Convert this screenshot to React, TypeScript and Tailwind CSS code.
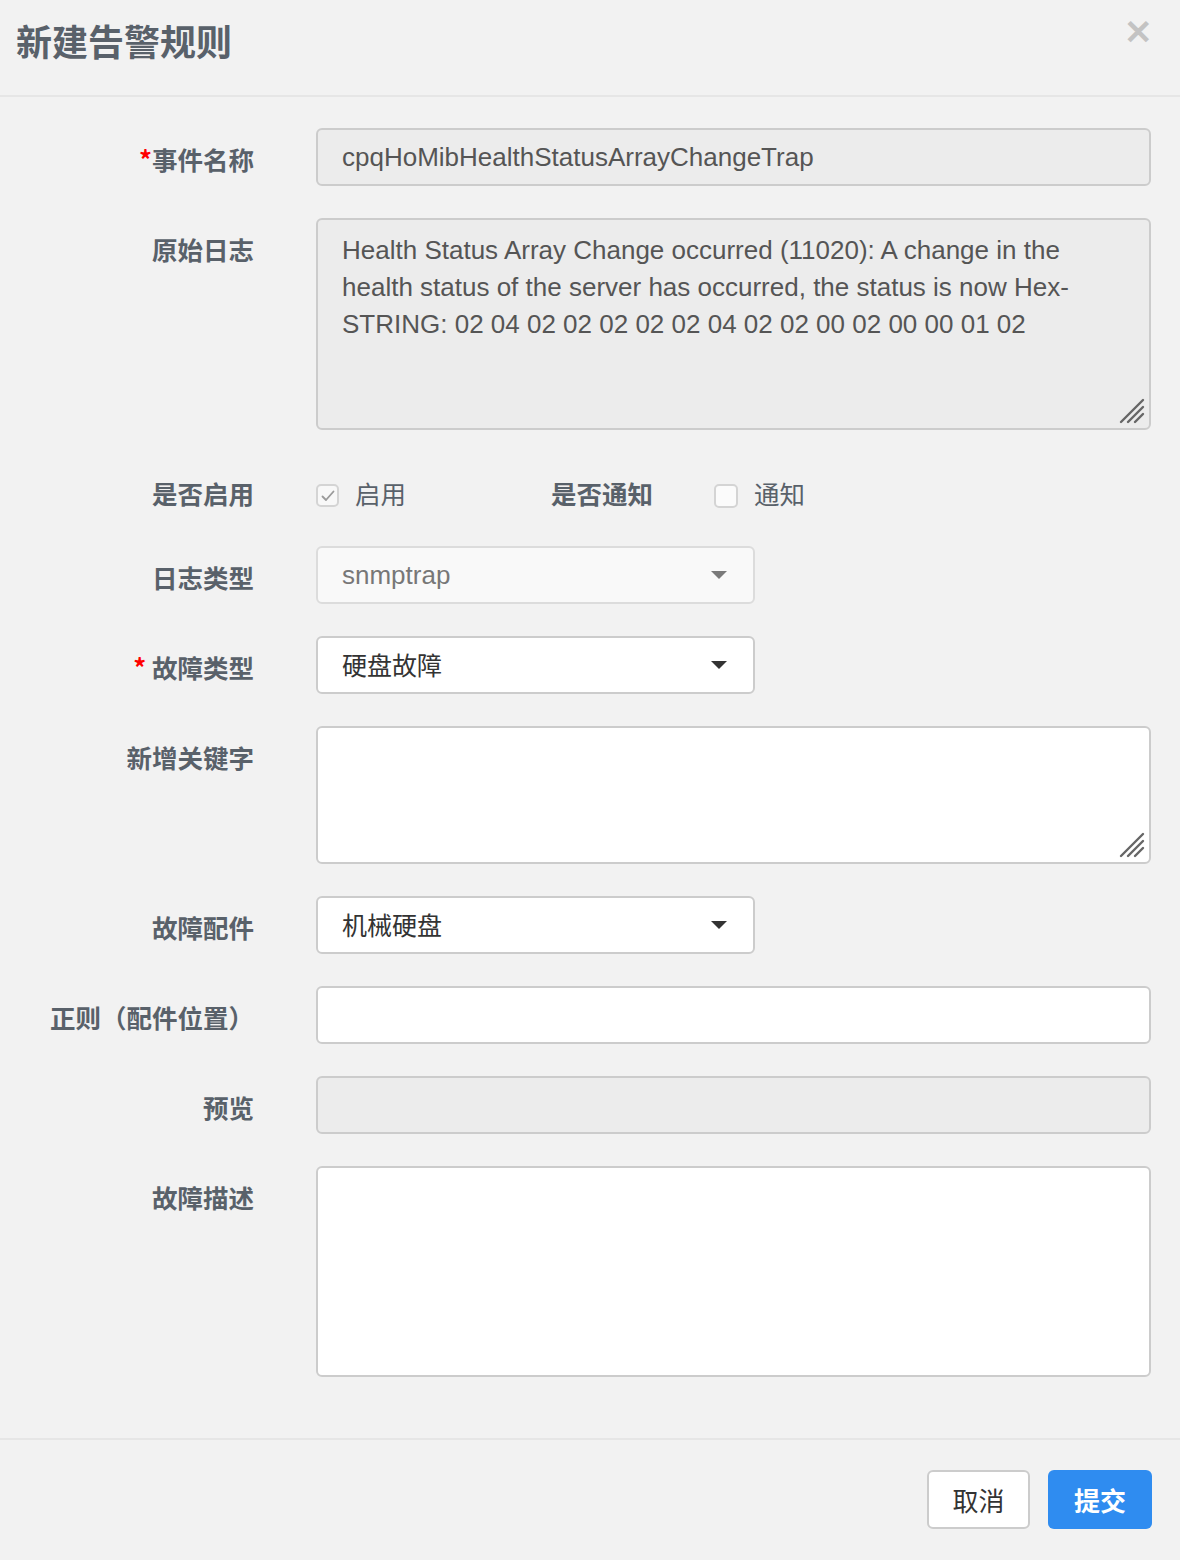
import React from "react";

const cjk = { fontFamily: '"Noto Sans CJK SC", "Liberation Sans", sans-serif' };
const latin = { fontFamily: '"Liberation Sans", "Noto Sans CJK SC", sans-serif' };

const Grip = () => (
    <svg className="absolute right-[3px] bottom-[3px]" width="28" height="28" viewBox="0 0 28 28">
        <g stroke="#666666" strokeWidth="2.4" strokeLinecap="round">
            <line x1="3" y1="25" x2="25" y2="3" />
            <line x1="10" y1="25" x2="25" y2="10" />
            <line x1="17" y1="25" x2="25" y2="17" />
        </g>
    </svg>
);

const Caret = ( { color }: { color: string } ) => (
    <svg width="16" height="8" viewBox="0 0 16 8">
        <path d="M0 0 L16 0 L8 8 Z" fill={ color } />
    </svg>
);

const Row = ( { label, required, children, last }: { label: string; required?: "tight" | "space"; children: React.ReactNode; last?: boolean } ) => (
    <div className={ "flex " + ( last ? "" : "mb-[32px]" ) }>
        <div className="w-[254px] shrink-0 text-right pt-[13px] text-[25.5px] leading-[36px] font-bold text-[#59616a]" style={ cjk }>
            { required && <span className="text-[#ff0000]">{ required === "space" ? "* " : "*" }</span> }
            { label }
        </div>
        <div className="ml-[62px] flex-1">{ children }</div>
    </div>
);

const App = () =>
{
    return (
        <div className="w-[1180px] h-[1560px] bg-[#f2f2f2] flex flex-col">
            <div className="h-[97px] border-b-2 border-[#e6e6e6] flex items-start justify-between px-[16px]">
                <h1 className="mt-[16px] text-[36px] leading-[48px] font-bold text-[#59616a]" style={ cjk }>新建告警规则</h1>
                <span className="mt-[14px] mr-[12px] text-[#c3c3c3] text-[34px] leading-[36px] font-bold" style={ latin }>✕</span>
            </div>

            <div className="pt-[31px] pr-[29px] flex-1">
                <Row label="事件名称" required="tight">
                    <div className="h-[58px] rounded-[6px] border-2 border-[#cccccc] bg-[#ececec] px-[24px] flex items-center text-[26px] text-[#555555]" style={ latin }>
                        cpqHoMibHealthStatusArrayChangeTrap
                    </div>
                </Row>

                <Row label="原始日志">
                    <div className="relative h-[212px] rounded-[6px] border-2 border-[#cccccc] bg-[#ececec] pl-[24px] pr-[60px] pt-[12px] text-[26px] leading-[37px] text-[#555555]" style={ latin }>
                        Health Status Array Change occurred (11020): A change in the health status of the server has occurred, the status is now Hex-STRING: 02 04 02 02 02 02 02 04 02 02 00 02 00 00 01 02
                        <Grip />
                    </div>
                </Row>

                <div className="flex h-[52px] mb-[32px]">
                    <div className="w-[254px] shrink-0 text-right pt-[13px] text-[25.5px] leading-[36px] font-bold text-[#59616a]" style={ cjk }>是否启用</div>
                    <div className="ml-[62px] flex items-start pt-[13px]">
                        <div className="mt-[9px] w-[23px] h-[23px] rounded-[5px] border-2 border-[#d4d4d4] bg-[#f8f8f8] flex items-center justify-center">
                            <svg width="14" height="12" viewBox="0 0 14 12">
                                <path d="M1.5 6.5 L5 10 L12.5 1.5" fill="none" stroke="#9a9a9a" strokeWidth="1.8" strokeLinecap="round" strokeLinejoin="round" />
                            </svg>
                        </div>
                        <span className="ml-[16px] text-[25.5px] leading-[36px] text-[#59616a]" style={ cjk }>启用</span>
                        <span className="ml-[145px] text-[25.5px] leading-[36px] font-bold text-[#59616a]" style={ cjk }>是否通知</span>
                        <div className="ml-[61px] mt-[9px] w-[24px] h-[24px] rounded-[5px] border-2 border-[#d4d4d4] bg-[#fbfbfb]" />
                        <span className="ml-[16px] text-[25.5px] leading-[36px] text-[#59616a]" style={ cjk }>通知</span>
                    </div>
                </div>

                <Row label="日志类型">
                    <div className="w-[439px] h-[58px] rounded-[6px] border-2 border-[#dcdcdc] bg-[#f9f9f9] pl-[24px] pr-[26px] flex items-center justify-between text-[26px] text-[#777777]" style={ latin }>
                        <span>snmptrap</span>
                        <Caret color="#7a7a7a" />
                    </div>
                </Row>

                <Row label="故障类型" required="space">
                    <div className="w-[439px] h-[58px] rounded-[6px] border-2 border-[#cccccc] bg-white pl-[24px] pr-[26px] flex items-center justify-between text-[25px] text-[#333333]" style={ cjk }>
                        <span>硬盘故障</span>
                        <Caret color="#333333" />
                    </div>
                </Row>

                <Row label="新增关键字">
                    <div className="relative h-[138px] rounded-[6px] border-2 border-[#cccccc] bg-white">
                        <Grip />
                    </div>
                </Row>

                <Row label="故障配件">
                    <div className="w-[439px] h-[58px] rounded-[6px] border-2 border-[#cccccc] bg-white pl-[24px] pr-[26px] flex items-center justify-between text-[25px] text-[#333333]" style={ cjk }>
                        <span>机械硬盘</span>
                        <Caret color="#333333" />
                    </div>
                </Row>

                <Row label="正则（配件位置）">
                    <div className="h-[58px] rounded-[6px] border-2 border-[#cccccc] bg-white" />
                </Row>

                <Row label="预览">
                    <div className="h-[58px] rounded-[6px] border-2 border-[#cccccc] bg-[#ececec]" />
                </Row>

                <Row label="故障描述" last>
                    <div className="h-[211px] rounded-[6px] border-2 border-[#cccccc] bg-white" />
                </Row>
            </div>

            <div className="h-[122px] border-t-2 border-[#e6e6e6] flex items-start justify-end gap-[18px] pt-[30px] pr-[28px]" style={ cjk }>
                <button className="w-[103px] h-[59px] rounded-[6px] border-2 border-[#cccccc] bg-white text-[26px] text-[#333333]">取消</button>
                <button className="w-[104px] h-[59px] rounded-[6px] bg-[#2f8cf0] text-[26px] font-bold text-white">提交</button>
            </div>
        </div>
    );
};

export default App;
